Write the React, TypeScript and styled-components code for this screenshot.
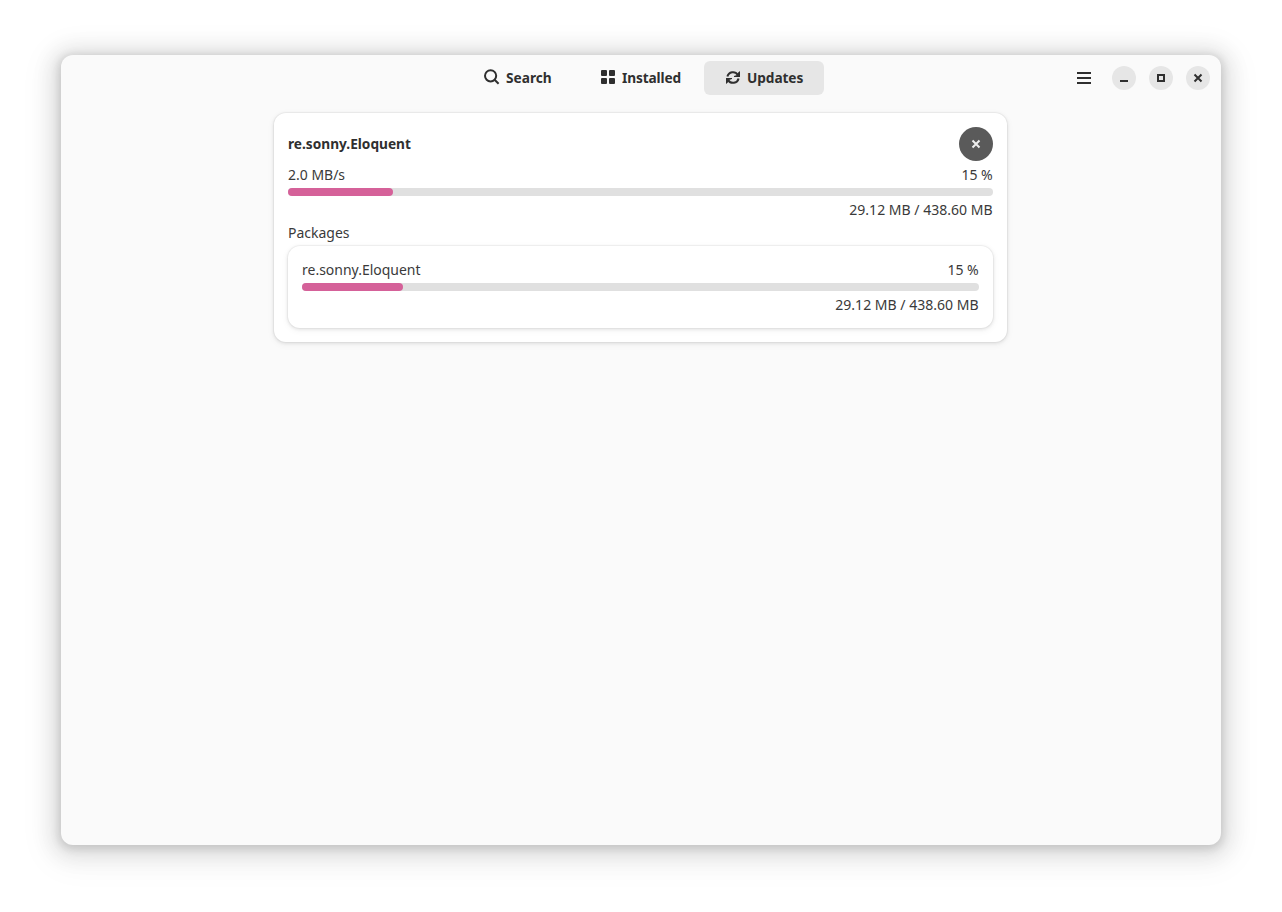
import React from 'react';
import styled, { createGlobalStyle } from 'styled-components';

const GlobalStyle = createGlobalStyle`
  * { box-sizing: border-box; }
  body {
    margin: 0;
    background: #fff;
    color: #3a3a3a;
    font: 400 14.67px/19px 'Noto Sans', 'Open Sans', sans-serif;
  }
  svg { display: block; flex: none; overflow: visible; }
`;

const Desktop = styled.div`
  height: 912px;
  padding: 55px 61px 67px;
  overflow: hidden;
`;

const Window = styled.main`
  height: 790px;
  border-radius: 12px;
  background: #fafafa;
  box-shadow:
    0 2px 8px 2px rgba(0, 0, 0, 0.13),
    0 3px 20px 10px rgba(0, 0, 0, 0.09),
    0 6px 32px 16px rgba(0, 0, 0, 0.04);
`;

const HeaderBar = styled.header`
  display: grid;
  grid-template-columns: 1fr 366px 1fr;
  align-items: center;
  height: 46px;
  padding-right: 11px;
  padding-left: 11px;
`;

const Switcher = styled.nav`
  grid-column: 2;
  display: flex;
  gap: 3px;
`;

const SwitcherButton = styled.button<{ $active?: boolean }>`
  display: flex;
  align-items: center;
  justify-content: center;
  gap: 6px;
  width: 120px;
  height: 34px;
  padding: 0;
  border: 0;
  border-radius: 6px;
  background: ${(p) => (p.$active ? '#e6e6e6' : 'transparent')};
  color: #2f2f2f;
  font: inherit;
`;

/* Slightly condensed text, anchored to its left edge. */
const Label = styled.span`
  transform: scaleX(0.954);
  transform-origin: left center;
  white-space: nowrap;
`;

const Figure = styled(Label)`
  padding-right: 0.3px;
  transform: scaleX(0.958);
  transform-origin: right center;
`;

const Heading = styled(Label)<{ $trim?: number; $track?: number }>`
  margin-right: ${(p) => -(p.$trim ?? 0)}px;
  padding-bottom: 2px;
  color: #2f2f2f;
  font-weight: 660;
  letter-spacing: ${(p) => p.$track ?? 0}px;
  transform: scaleX(0.933);
`;

const Controls = styled.div`
  display: flex;
  align-items: center;
  justify-content: flex-end;
  gap: 13px;
  color: #2f2f2f;
`;

const MenuButton = styled.button`
  display: flex;
  margin-right: 7px;
  padding: 0;
  border: 0;
  background: none;
  color: inherit;
`;

const RoundButton = styled.button<{ $size: number; $dark?: boolean }>`
  display: flex;
  align-items: center;
  justify-content: center;
  width: ${(p) => p.$size}px;
  height: ${(p) => p.$size}px;
  padding: 0;
  border: 0;
  border-radius: 50%;
  background: ${(p) => (p.$dark ? '#5a5a5a' : '#e6e6e6')};
  color: ${(p) => (p.$dark ? '#eeeeee' : '#2f2f2f')};
`;

const Card = styled.section`
  display: flex;
  flex-direction: column;
  gap: 4px;
  padding: 14px;
  border-radius: 12px;
  background: #fff;
  box-shadow:
    0 0 0 1px rgba(0, 0, 0, 0.03),
    0 1px 3px 1px rgba(0, 0, 0, 0.07),
    0 2px 6px 2px rgba(0, 0, 0, 0.03);
`;

const Clamp = styled.div`
  width: 733px;
  margin: 12px 0 0 213px;
`;

const Row = styled.div<{ $end?: boolean }>`
  display: flex;
  align-items: center;
  justify-content: ${(p) => (p.$end ? 'flex-end' : 'space-between')};
`;

const Track = styled.div`
  height: 8px;
  border-radius: 4px;
  background: #e0e0e0;
`;

const Fill = styled.div`
  height: 8px;
  border-radius: 4px;
  background: #d56199;
`;

const SearchIcon = () => (
  <svg width="16" height="16" viewBox="0 0 16 16" fill="none" stroke="currentColor" strokeWidth="2">
    <circle cx="6.6" cy="5.8" r="5.6" />
    <path d="M10.6 9.8 14.6 13.8" />
  </svg>
);

const GridIcon = () => (
  <svg width="16" height="16" viewBox="0 0 16 16" fill="currentColor">
    <rect x="1" y="0" width="6" height="6" rx="1" />
    <rect x="9" y="0" width="6" height="6" rx="1" />
    <rect x="1" y="8" width="6" height="6" rx="1" />
    <rect x="9" y="8" width="6" height="6" rx="1" />
  </svg>
);

const UpdateIcon = () => (
  <svg width="16" height="16" viewBox="0 0 16 16" fill="none" stroke="currentColor" strokeWidth="2">
    <path d="M2.4 6.6A5.7 5.7 0 0 1 12.8 4.9M13.6 8.4A5.7 5.7 0 0 1 3.2 10.1" />
    <path d="M15 1v6H9V6l3-1 1.2-2.4ZM1 14V8h6v1L4 10l-1.2 2.4Z" fill="currentColor" stroke="none" />
  </svg>
);

const MenuIcon = () => (
  <svg width="16" height="16" viewBox="0 0 16 16" fill="currentColor">
    <path d="M1 2h14v2H1zM1 7h14v2H1zM1 12h14v2H1z" />
  </svg>
);

const MinimizeIcon = () => (
  <svg width="16" height="16" viewBox="0 0 16 16" fill="currentColor">
    <path d="M4 10h8v2H4z" />
  </svg>
);

const MaximizeIcon = () => (
  <svg width="16" height="16" viewBox="0 0 16 16" fill="none" stroke="currentColor" strokeWidth="2">
    <path d="M5 5h6v6H5z" />
  </svg>
);

const CloseIcon = () => (
  <svg width="16" height="16" viewBox="0 0 16 16" fill="none" stroke="currentColor" strokeWidth="2">
    <path d="M4.5 4.5l7 7M11.5 4.5l-7 7" />
  </svg>
);

interface ProgressProps {
  done: number;
  total: number;
  width: number;
}

const Progress = ({ done, total, width }: ProgressProps) => (
  <>
    <Track>
      <Fill style={{ width }} />
    </Track>
    <Row $end>
      <Figure>{`${done.toFixed(2)} MB / ${total.toFixed(2)} MB`}</Figure>
    </Row>
  </>
);

export default function App() {
  return (
    <Desktop>
      <GlobalStyle />
      <Window>
        <HeaderBar>
          <Switcher>
            <SwitcherButton><SearchIcon /><Heading $trim={2}>Search</Heading></SwitcherButton>
            <SwitcherButton><GridIcon /><Heading $trim={4} $track={-0.14}>Installed</Heading></SwitcherButton>
            <SwitcherButton $active><UpdateIcon /><Heading $trim={4} $track={-0.08}>Updates</Heading></SwitcherButton>
          </Switcher>
          <Controls>
            <MenuButton aria-label="Menu"><MenuIcon /></MenuButton>
            <RoundButton $size={24} aria-label="Minimize"><MinimizeIcon /></RoundButton>
            <RoundButton $size={24} aria-label="Maximize"><MaximizeIcon /></RoundButton>
            <RoundButton $size={24} aria-label="Close"><CloseIcon /></RoundButton>
          </Controls>
        </HeaderBar>
        <Clamp>
          <Card>
            <Row>
              <Heading>re.sonny.Eloquent</Heading>
              <RoundButton $size={34} $dark aria-label="Cancel"><CloseIcon /></RoundButton>
            </Row>
            <Row><Label>2.0 MB/s</Label><Figure>15 %</Figure></Row>
            <Progress done={29.12} total={438.6} width={105} />
            <Row><Label>Packages</Label></Row>
            <Card>
              <Row><Label>re.sonny.Eloquent</Label><Figure>15 %</Figure></Row>
              <Progress done={29.12} total={438.6} width={101} />
            </Card>
          </Card>
        </Clamp>
      </Window>
    </Desktop>
  );
}
